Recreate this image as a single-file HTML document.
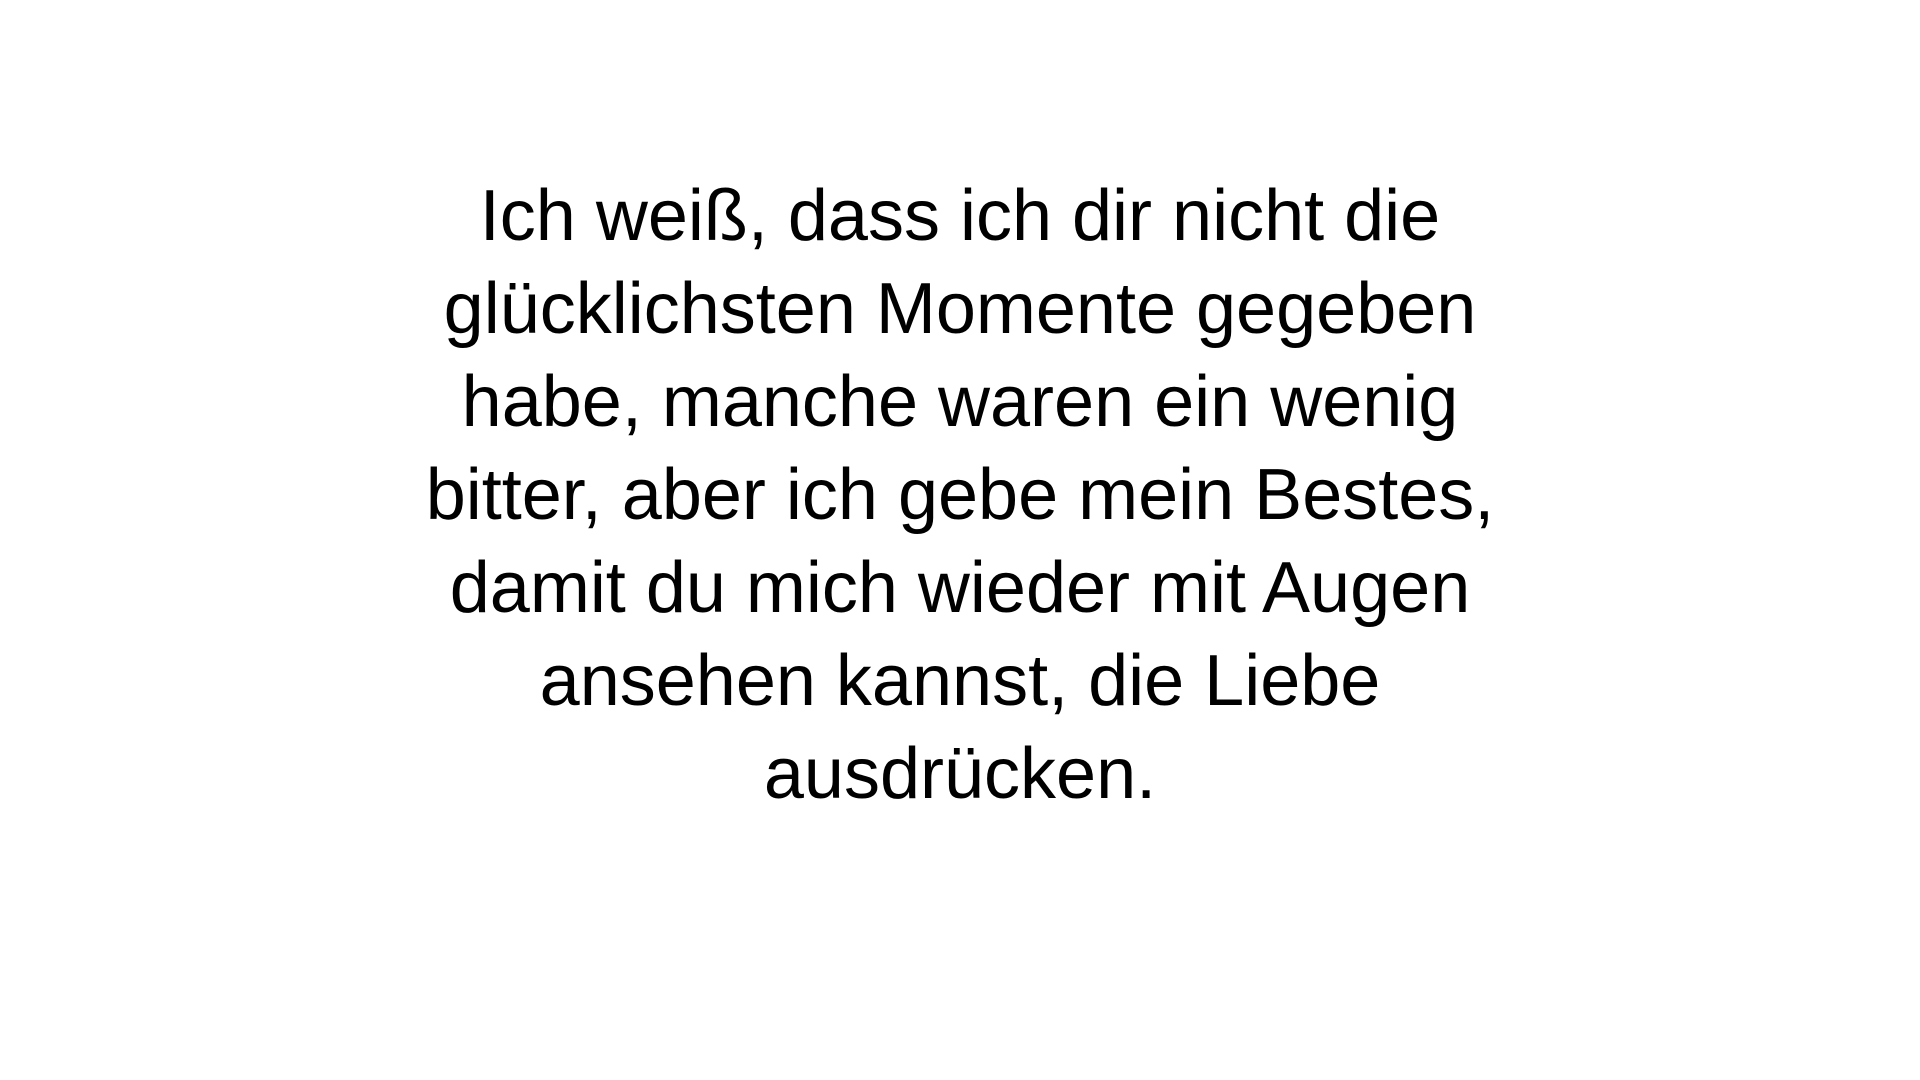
<!DOCTYPE html>
<html><head><meta charset="utf-8"><style>
html,body{margin:0;padding:0;background:#fff;width:1920px;height:1080px;overflow:hidden}
.t{position:absolute;top:170px;left:0;width:1920px;text-align:center;font-family:"Liberation Sans",sans-serif;font-size:72px;line-height:93px;color:#000;letter-spacing:0}
.t div{white-space:nowrap}
</style></head><body>
<div class="t">
<div>Ich weiß, dass ich dir nicht die</div>
<div>glücklichsten Momente gegeben</div>
<div>habe, manche waren ein wenig</div>
<div>bitter, aber ich gebe mein Bestes,</div>
<div>damit du mich wieder mit Augen</div>
<div>ansehen kannst, die Liebe</div>
<div>ausdrücken.</div>
</div>
</body></html>
